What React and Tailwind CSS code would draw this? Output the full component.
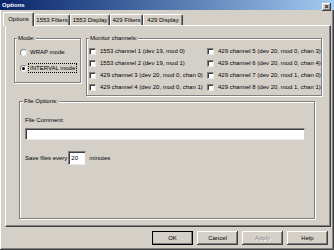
import React from "react";

const raised =
  "shadow-[inset_-1px_-1px_0_#404040,inset_1px_1px_0_#ffffff,inset_-2px_-2px_0_#808080]";

function Radio({ checked, children, focus }) {
  return (
    <div className="flex h-[12px] items-center">
      <div className="flex h-[7px] w-[7px] shrink-0 items-center justify-center rounded-full border border-[#808080] border-b-[#e8e8e8] border-r-[#e8e8e8] bg-white">
        {checked && <div className="h-[3px] w-[3px] rounded-full bg-black" />}
      </div>
      <span
        className={
          focus
            ? "ml-[1px] whitespace-nowrap border border-dotted border-black px-[1px] leading-[8px]"
            : "ml-[2px] whitespace-nowrap px-[1px]"
        }
      >
        {children}
      </span>
    </div>
  );
}

function Check({ children }) {
  return (
    <div className="flex h-[12px] items-center gap-[4px]">
      <div className="h-[7px] w-[7px] shrink-0 border border-[#808080] border-b-[#e8e8e8] border-r-[#e8e8e8] bg-white shadow-[inset_1px_1px_0_#404040]" />
      <span className="whitespace-nowrap">{children}</span>
    </div>
  );
}

const group =
  "border border-[#808080] shadow-[inset_1px_1px_0_#ffffff,1px_1px_0_#ffffff]";

function Tab({ children, selected, w }) {
  return (
    <div
      className={
        (selected
          ? "relative z-10 -mb-[1px] h-[14px] pt-[3px] "
          : "h-[11px] pt-[2px] ") +
        w +
        " flex justify-center rounded-t-[2px] border-l border-t border-white border-r border-r-[#404040] bg-[#d4d0c8] shadow-[inset_-1px_0_0_#808080] whitespace-nowrap"
      }
    >
      {children}
    </div>
  );
}

function Button({ children, def, disabled }) {
  return (
    <div
      className={
        "flex h-[14px] w-[41px] items-center justify-center bg-[#d4d0c8] " +
        raised +
        (def ? " outline outline-1 outline-black -outline-offset-1" : "") +
        (disabled ? " text-[#808080] [text-shadow:1px_1px_0_#ffffff]" : "")
      }
    >
      {children}
    </div>
  );
}

export default function App() {
  return (
    <div
      className={
        "flex h-[250px] w-[334px] flex-col overflow-hidden bg-[#d4d0c8] font-['Liberation_Sans',Arial,sans-serif] text-[6px] leading-[7px] text-black " +
        raised
      }
    >
      {/* Title bar */}
      <div className="flex h-[10px] items-center justify-between bg-gradient-to-r from-[#0a246a] to-[#a6caf0] pl-[2px] pr-[3px]">
        <span className="font-bold text-white">Options</span>
        <div
          className={
            "mt-[3px] flex h-[8px] w-[9px] items-center justify-center bg-[#d4d0c8] text-[7px] font-bold leading-[7px] " +
            raised
          }
        >
          ×
        </div>
      </div>

      {/* Body */}
      <div className="flex flex-col pl-[5px] pr-[3px] pt-[2px]">
        <div className="-ml-[2px] flex items-end">
          <Tab selected w="w-[31px]">Options</Tab>
          <Tab w="w-[36px]">1553 Filters</Tab>
          <Tab w="w-[40px]">1553 Display</Tab>
          <Tab w="w-[33px]">429 Filters</Tab>
          <Tab w="w-[40px]">429 Display</Tab>
        </div>

        <div
          className={
            "flex h-[202px] flex-col border-l border-t border-white border-r border-b border-r-[#404040] border-b-[#404040] px-[8px] pt-[9px] shadow-[inset_-1px_-1px_0_#808080]"
          }
        >
          <div className="flex items-start gap-[5px]">
            <fieldset className={"h-[48px] w-[67px] " + group}>
              <legend className="ml-[2px] bg-[#d4d0c8] px-[1px]">Mode:</legend>
              <div className="flex flex-col gap-[4px] pl-[5px] pt-[4px]">
                <Radio>WRAP mode</Radio>
                <Radio checked focus>
                  INTERVAL mode
                </Radio>
              </div>
            </fieldset>
            <fieldset className={"h-[61px] flex-1 " + group}>
              <legend className="ml-[2px] bg-[#d4d0c8] px-[1px]">
                Monitor channels:
              </legend>
              <div className="grid grid-cols-[118px_1fr] pl-[2px] pt-[3px]">
                <div className="flex flex-col">
                  <Check>1553 channel 1 (dev 19, mod 0)</Check>
                  <Check>1553 channel 2 (dev 19, mod 1)</Check>
                  <Check>429 channel 3 (dev 20, mod 0, chan 0)</Check>
                  <Check>429 channel 4 (dev 20, mod 0, chan 1)</Check>
                </div>
                <div className="flex flex-col">
                  <Check>429 channel 5 (dev 20, mod 0, chan 3)</Check>
                  <Check>429 channel 6 (dev 20, mod 0, chan 4)</Check>
                  <Check>429 channel 7 (dev 20, mod 1, chan 0)</Check>
                  <Check>429 channel 8 (dev 20, mod 1, chan 1)</Check>
                </div>
              </div>
            </fieldset>
          </div>

          <fieldset className={"ml-[5px] mr-[7px] mt-[2px] h-[121px] " + group}>
            <legend className="ml-[3px] bg-[#d4d0c8] px-[1px]">
              File Options:
            </legend>
            <div className="flex flex-col pl-[5px] pr-[9px] pt-[12px]">
              <span>File Comment:</span>
              <div className="mt-[4px] h-[12px] w-full border-l border-t border-[#808080] border-r border-b border-r-[#d4d0c8] border-b-[#e8e8e8] bg-white shadow-[inset_1px_1px_0_#404040]" />
              <div className="mt-[11px] flex h-[14px] items-center">
                <span className="whitespace-nowrap">Save files every</span>
                <div className="ml-[1px] flex h-[14px] w-[18px] items-center border-l border-t border-[#808080] border-r border-b border-r-[#d4d0c8] border-b-[#e8e8e8] bg-white pl-[2px] shadow-[inset_1px_1px_0_#404040]">
                  20
                </div>
                <span className="ml-[3px]">minutes</span>
              </div>
            </div>
          </fieldset>
        </div>

        <div className="mt-[4px] flex justify-end gap-[4px] pr-[3px]">
          <Button def>OK</Button>
          <Button>Cancel</Button>
          <Button disabled>Apply</Button>
          <Button>Help</Button>
        </div>
      </div>
    </div>
  );
}
